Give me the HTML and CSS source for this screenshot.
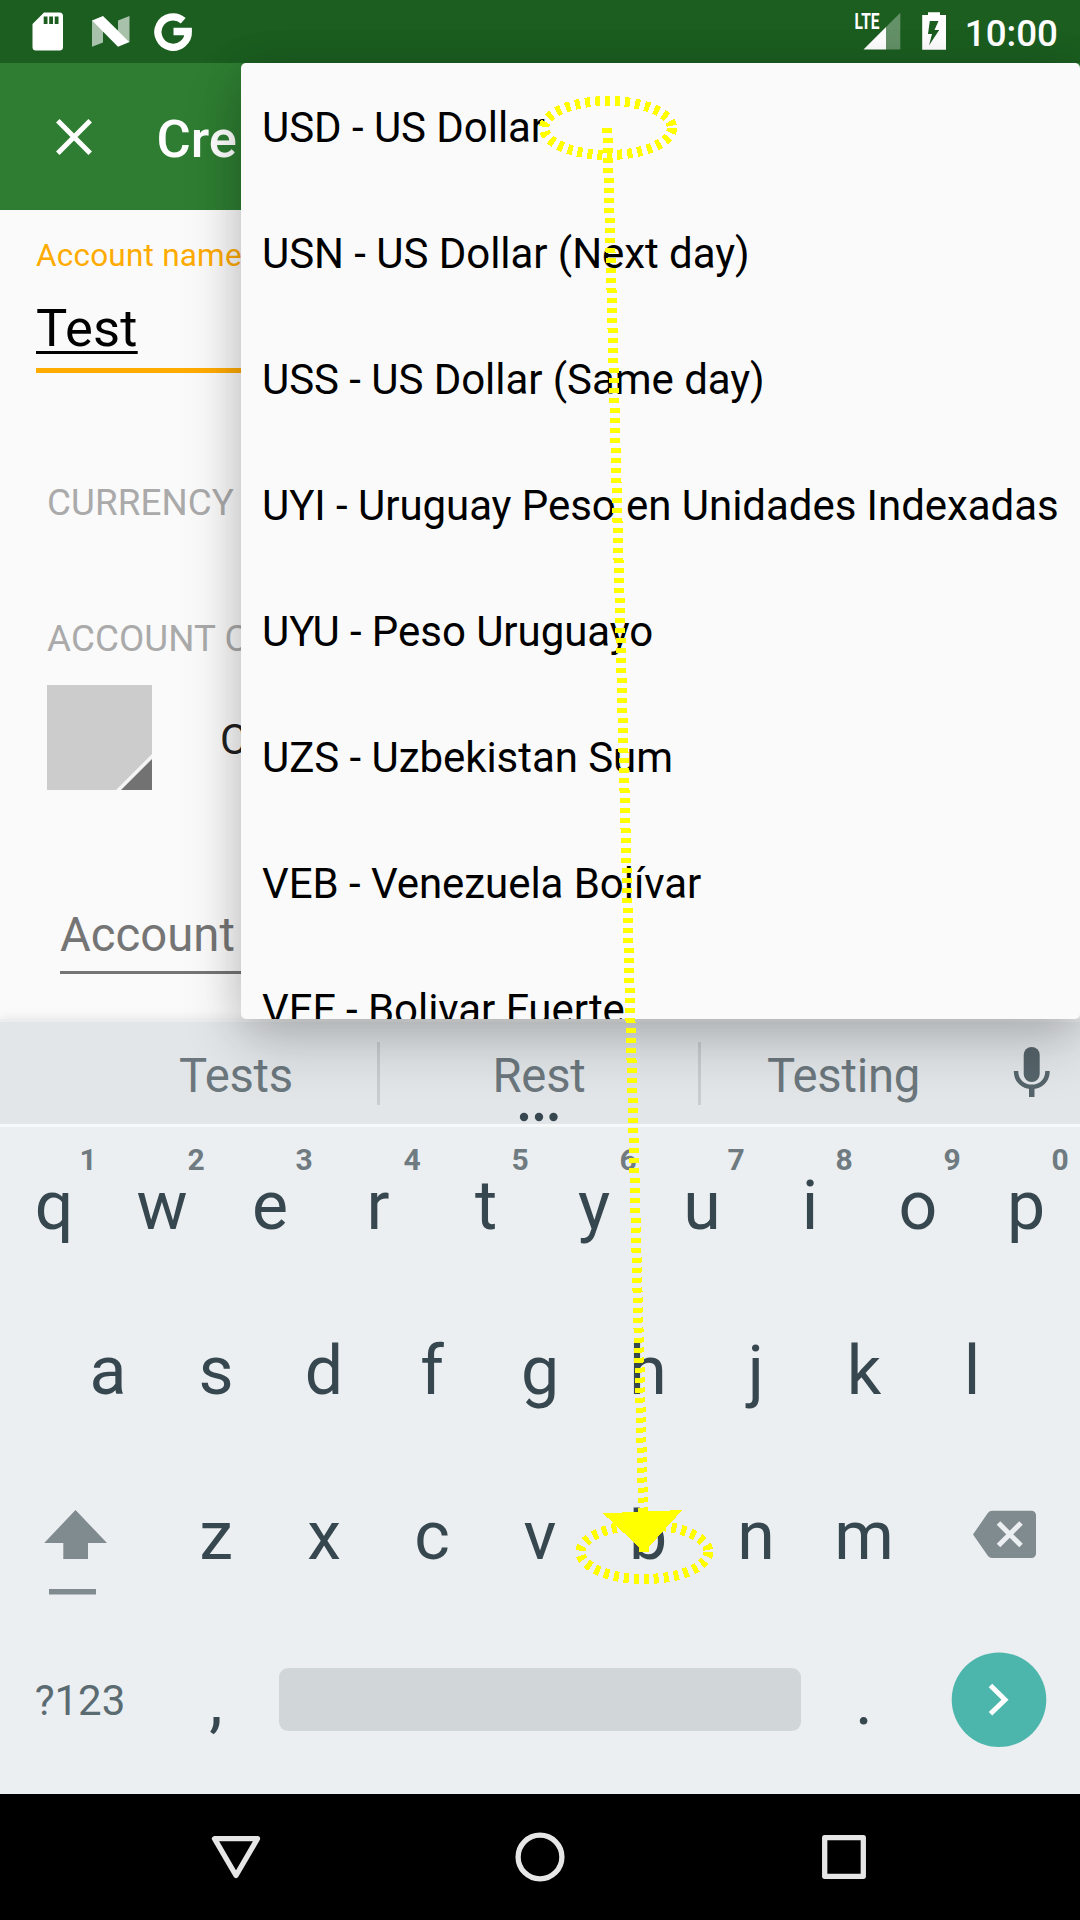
FILE: index.html
```html
<!DOCTYPE html>
<html lang="en">
<head>
<meta charset="utf-8">
<title>Create Account</title>
<link rel="stylesheet" href="styles.css">
</head>
<body>
<div class="screen">
  <header class="status">
    <svg class="status-left" width="200" height="63" viewBox="0 0 200 63">
      <path fill="#fff" fill-rule="evenodd" d="M44 12.500H59.500a3.500 3.500 0 0 1 3.500 3.500V47a3.500 3.500 0 0 1-3.500 3.500H36a3.500 3.500 0 0 1-3.500-3.500V24zM43.700 16.500v7.500h3.800v-7.500zM49.200 16.500v7.500h3.800v-7.500zM54.700 16.500v7.500h3.800v-7.500z"/>
      <path fill="#fff" opacity=".62" d="M92 20L103 31V42.500L92 46.700zM118 20.500L129.500 16V42L118 31z"/>
      <path fill="#fff" d="M92 20.500L103 16 129.500 42 118 46.700z"/>
      <path fill="none" stroke="#fff" stroke-width="7.300" d="M183.200 20.700A15.200 15.200 0 1 0 188.300 31.500H173.500"/>
    </svg>
    <div class="status-right">
      <svg width="100" height="63" viewBox="850 0 100 63">
        <text class="lte" x="854.500" y="29" textLength="25" lengthAdjust="spacingAndGlyphs">LTE</text>
        <path fill="#fff" opacity=".32" d="M886 27L900.300 12.700V49.500H886z"/>
        <path fill="#fff" d="M863.500 49.500L886 27V49.500z"/>
        <path fill="#fff" fill-rule="evenodd" d="M928 12.300H940V15H946V49.700H922.200V15H928zM929.800 21L928 34H932L929 45.500 939.200 30H934.500L938.500 21z"/>
      </svg>
      <span class="clock">10:00</span>
    </div>
  </header>
  <div class="appbar">
    <svg width="36" height="36" viewBox="0 0 36 36"><path stroke="#fff" stroke-width="5" d="M1.800 1.800L34.200 34.200M34.200 1.800L1.800 34.200"/></svg>
    <h1 class="title">Cre</h1>
  </div>
  <main class="form">
    <div class="field-label">Account name</div>
    <div class="field-value">Test</div>
    <div class="field-line"></div>
    <div class="section currency">CURRENCY</div>
    <div class="section color-type">ACCOUNT C</div>
    <div class="color-row">
      <svg width="105" height="105" viewBox="0 0 105 105"><path fill="#ccc" d="M0 0h105v105H0z"/><path fill="#f5f5f5" d="M105 69v36H69z"/><path fill="#727272" d="M105 74v31H74z"/></svg>
      <span class="type">C</span>
    </div>
    <div class="desc">Account</div>
    <div class="desc-line"></div>
  </main>
  <section class="keyboard">
    <div class="suggest">
      <span></span>
      <span class="word">Tests</span><i class="sep"></i>
      <span class="word">Rest
        <svg class="more" width="40" height="10" viewBox="0 0 40 10"><g fill="#37474f"><circle cx="5" cy="5" r="4.200"/><circle cx="20" cy="5" r="4.200"/><circle cx="34.500" cy="5" r="4.200"/></g></svg>
      </span><i class="sep"></i>
      <span class="word">Testing</span>
      <span class="mic"><svg width="40" height="52" viewBox="0 0 40 52"><rect x="11.700" y="1" width="16" height="35" rx="8" fill="#56646b"/><path fill="none" stroke="#56646b" stroke-width="4.500" d="M4 25C4 46 35.500 46 35.500 25"/><path fill="#56646b" d="M17 41h5.500v10H17z"/></svg></span>
    </div>
    <div class="row">
      <span class="key">q<b>1</b></span><span class="key">w<b>2</b></span><span class="key">e<b>3</b></span><span class="key">r<b>4</b></span><span class="key">t<b>5</b></span><span class="key">y<b>6</b></span><span class="key">u<b>7</b></span><span class="key">i<b>8</b></span><span class="key">o<b>9</b></span><span class="key">p<b>0</b></span>
    </div>
    <div class="row">
      <span class="key">a</span><span class="key">s</span><span class="key">d</span><span class="key">f</span><span class="key">g</span><span class="key">h</span><span class="key">j</span><span class="key">k</span><span class="key">l</span>
    </div>
    <div class="row">
      <span class="wide"><svg width="162" height="165" viewBox="0 1457 162 165"><path fill="#808b8f" d="M75.500 1510L107 1543H88v16H63.300v-16H44.200zM49 1589H96v5.600H49z"/></svg></span>
      <span class="key">z</span><span class="key">x</span><span class="key">c</span><span class="key">v</span><span class="key">b</span><span class="key">n</span><span class="key">m</span>
      <span class="wide"><svg width="162" height="165" viewBox="918 1457 162 165"><path fill="#808b8f" d="M992 1510.700H1031.500a4.500 4.500 0 0 1 4.500 4.500V1553.500a4.500 4.500 0 0 1-4.500 4.500H992a5 5 0 0 1-4-2L973 1534.500 988 1512.700a5 5 0 0 1 4-2z"/><path stroke="#eceff1" stroke-width="5" d="M998.500 1523L1021 1545.500M1021 1523L998.500 1545.500"/></svg></span>
    </div>
    <div class="row">
      <span class="symbols">?123</span>
      <span class="key">,</span>
      <span class="space"></span>
      <span class="key">.</span>
      <span class="wide"><svg width="162" height="165" viewBox="918 1622 162 165"><circle cx="999" cy="1699.700" r="47.300" fill="#4db6ac"/><path fill="none" stroke="#fff" stroke-width="5" d="M990.500 1685.500L1005 1699.700 990.500 1713.700"/></svg></span>
    </div>
  </section>
  <nav class="nav">
    <svg width="60" height="60" viewBox="0 0 60 60"><path d="M8.500 11.700H51.500L30 48.500z"/></svg>
    <svg width="60" height="60" viewBox="0 0 60 60"><circle cx="30" cy="30" r="21.900"/></svg>
    <svg width="60" height="60" viewBox="0 0 60 60"><rect x="10.700" y="10.700" width="38.600" height="38.600"/></svg>
  </nav>
  <ul class="menu">
    <li>USD - US Dollar</li>
    <li>USN - US Dollar (Next day)</li>
    <li>USS - US Dollar (Same day)</li>
    <li>UYI - Uruguay Peso en Unidades Indexadas</li>
    <li>UYU - Peso Uruguayo</li>
    <li>UZS - Uzbekistan Sum</li>
    <li>VEB - Venezuela Bolívar</li>
    <li>VEF - Bolivar Fuerte</li>
  </ul>
  <svg class="gesture" width="1080" height="1920" viewBox="0 0 1080 1920" shape-rendering="crispEdges">
    <g fill="none" stroke="#ff0" stroke-width="10" stroke-dasharray="5 5">
      <ellipse cx="608" cy="128" rx="64" ry="27"/>
      <ellipse cx="644.500" cy="1552" rx="64" ry="27"/>
      <path d="M607.300 128L644.300 1552"/>
    </g>
    <path fill="#ff0" d="M603 1513.300L682.300 1510 644.300 1552z"/>
  </svg>
</div>
</body>
</html>
```
FILE: styles.css
```css
* { box-sizing: border-box; }
body { margin: 0; font-family: Roboto, "Liberation Sans", sans-serif; }
svg { display: block; flex: none; }

.screen {
  position: relative;
  display: flex;
  flex-direction: column;
  width: 1080px;
  height: 1920px;
  overflow: hidden;
  background: #fafafa;
}

.status {
  display: flex;
  justify-content: space-between;
  height: 63px;
  background: #1b5e20;
}
.status-right { display: flex; padding-right: 22px; }
.lte { fill: #fff; font-size: 22px; font-weight: 700; }
.clock {
  margin-left: 15px;
  color: #fff;
  font-size: 36.75px;
  font-weight: 500;
  line-height: 67px;
}

.appbar {
  display: flex;
  align-items: center;
  gap: 65px;
  height: 147px;
  padding-left: 55.5px;
  background: #2e7d32;
}
.title {
  margin: 4px 0 0;
  color: #fff;
  font-size: 52.5px;
  font-weight: 500;
  line-height: 60px;
}

.form {
  height: 809px;
  padding: 28px 0 0 36px;
  overflow: hidden;
  white-space: nowrap;
}
.field-label { color: #ffab00; font-size: 31.5px; line-height: 36px; letter-spacing: .22px; }
.field-value {
  margin-top: 24px;
  color: #000;
  font-size: 52.5px;
  letter-spacing: .2px;
  line-height: 60px;
  text-decoration: underline;
  text-decoration-thickness: 3px;
  text-underline-offset: 5px;
  text-decoration-skip-ink: none;
}
.field-line { height: 5px; margin-top: 10px; background: #ffab00; }
.section { margin-left: 11px; color: #aaa; font-size: 36.75px; letter-spacing: .1px; line-height: 42px; }
.currency { margin-top: 109px; }
.color-type { margin-top: 94px; }
.color-row { display: flex; margin: 25px 0 0 11px; height: 105px; }
.type { margin-left: 68px; color: #212121; font-size: 42px; line-height: 109px; }
.desc { margin: 118px 0 0 24px; color: #757575; font-size: 47.25px; line-height: 54px; }
.desc-line { height: 3px; margin: 9px 0 0 24px; background: #757575; }

.keyboard {
  height: 775px;
  border-top: 3px solid #ebedee;
  background: #eceff1;
  box-shadow: 0 -2px 10px rgba(0, 0, 0, .07);
}
.suggest {
  display: grid;
  grid-template-columns: 95px 282px 3px 318px 3px 285px 94px;
  height: 105px;
  border-bottom: 3px solid #f6f9fa;
  background: #e2e6e9;
}
.word {
  position: relative;
  color: #6b777d;
  font-size: 47.25px;
  letter-spacing: -.25px;
  line-height: 109px;
  text-align: center;
  height: 102px;
}
.more { position: absolute; left: 139px; bottom: 2px; }
.sep { height: 63px; margin-top: 20px; background: #c8cdd0; }
.mic { padding: 24px 0 0 26px; }

.row { display: flex; justify-content: center; height: 165px; }
.key {
  position: relative;
  width: 108px;
  color: #37474f;
  font-size: 68px;
  line-height: 159px;
  text-align: center;
}
.key b {
  position: absolute;
  top: 15px;
  left: 70px;
  width: 36px;
  color: #6f7b80;
  font-size: 30px;
  font-weight: 700;
  line-height: 36px;
}
.wide { width: 162px; }
.symbols {
  width: 162px;
  padding-right: 2px;
  color: #5b6b72;
  font-size: 42px;
  line-height: 157px;
  text-align: center;
}
.space {
  width: 522px;
  height: 63px;
  margin: 46px 9px 0;
  border-radius: 9px;
  background: #d1d6d9;
}

.nav {
  display: flex;
  align-items: center;
  justify-content: center;
  gap: 244px;
  height: 126px;
  background: #000;
}
.nav svg { fill: none; stroke: #e6e6e6; stroke-width: 5.300; stroke-linejoin: round; }

.menu {
  position: absolute;
  top: 63px;
  left: 241px;
  width: 839px;
  height: 956px;
  margin: 0;
  padding: 0 0 0 21px;
  overflow: hidden;
  border-radius: 5px;
  background: #fafafa;
  box-shadow: 0 24px 60px rgba(0, 0, 0, .2), 0 2px 40px rgba(0, 0, 0, .11);
  color: #000;
  font-size: 42px;
  letter-spacing: -.05px;
  list-style: none;
  white-space: nowrap;
}
.menu li { height: 126px; line-height: 129px; }

.gesture { position: absolute; top: 0; left: 0; }
```
